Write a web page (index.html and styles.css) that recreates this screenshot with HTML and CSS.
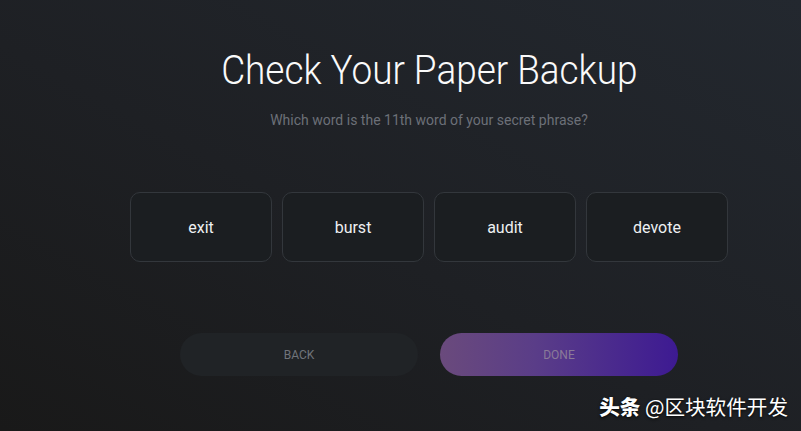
FILE: index.html
```html
<!DOCTYPE html>
<html>
  <head>
    <meta charset="utf-8" />
    <title>Check Your Paper Backup</title>
    <meta name="viewport" content="width=device-width, initial-scale=1.0" />
    <link rel="stylesheet" href="styles.css">
  </head>
  <body>
    <div class="page">
      <h1 class="title">Check Your Paper Backup</h1>
      <p class="subtitle">Which word is the 11th word of your secret phrase?</p>

      <div class="words">
        <button class="word">exit</button>
        <button class="word">burst</button>
        <button class="word">audit</button>
        <button class="word">devote</button>
      </div>

      <div class="actions">
        <button class="btn btn-back">BACK</button>
        <button class="btn btn-done">DONE</button>
      </div>
    </div>

    <div class="watermark"><b>头条</b> @区块软件开发</div>
  </body>
</html>
```

FILE: styles.css
```css
html,
body {
  height: 100%;
}

body {
  margin: 0;
  overflow: hidden;
  font-family: Roboto, "Noto Sans", sans-serif;
  background: linear-gradient(to top right, #191919 0%, #1e2024 45%, #23282f 100%);
  color: #fff;
  position: relative;
}

.page {
  display: flex;
  flex-direction: column;
  align-items: center;
  padding: 44px 0 0 57px;
}

.title {
  margin: 0;
  font-weight: 300;
  font-size: 41px;
  line-height: 52px;
  color: #fafafa;
  transform: scaleX(0.9);
}

.subtitle {
  margin: 14px 0 0;
  font-size: 14px;
  line-height: 20px;
  color: #6c7078;
}

/**
 * The four word choices
 */
.words {
  display: grid;
  grid-template-columns: repeat(4, 142px);
  gap: 10px;
  margin-top: 62px;
}

.word {
  height: 70px;
  background: #1b1e21;
  border: 1px solid #33373c;
  border-radius: 10px;
  color: #eef0f2;
  font-family: Roboto, sans-serif;
  font-size: 16px;
}

.actions {
  display: flex;
  gap: 22px;
  margin-top: 71px;
}

.btn {
  width: 238px;
  height: 43px;
  padding-top: 2px;
  border: none;
  border-radius: 22px;
  font-family: Roboto, sans-serif;
  font-size: 12px;
  color: #70747b;
}

.btn-back {
  background: #202326;
}

.btn-done {
  background: linear-gradient(to right, #6a4a7c, #5a3d88 40%, #3d1a92);
  color: #8a7a98;
}

.watermark {
  position: absolute;
  right: 13px;
  bottom: 10px;
  font-family: "Noto Sans CJK SC", sans-serif;
  font-size: 20.6px;
  color: #fff;
  text-shadow: 0 1px 3px rgba(0, 0, 0, 0.9);
}

.watermark b {
  font-weight: 900;
}
```
